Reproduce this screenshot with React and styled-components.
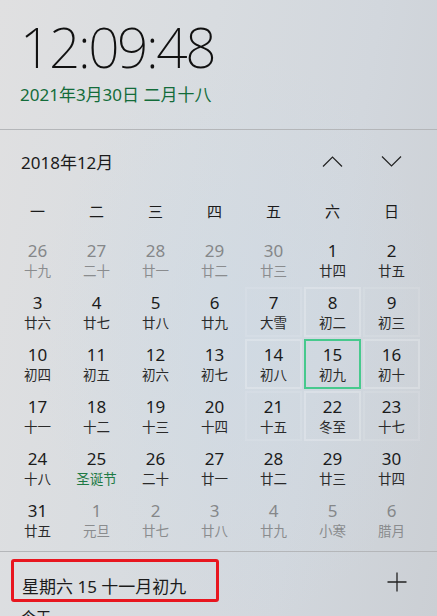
import styled, { createGlobalStyle } from 'styled-components';

const GlobalStyle = createGlobalStyle`
  html, body {
    margin: 0;
    padding: 0;
    overflow: hidden;
  }
  body {
    font-family: "Noto Sans", "Noto Sans CJK SC", sans-serif;
    color: #1b1b1b;
  }
`;

const weekdays = ['一', '二', '三', '四', '五', '六', '日'];

// [day, lunar, kind]  kind: o = other month, f = festival, s = selected, r1/r2 = hover reveal
const days = [
  [26, '十九', 'o'], [27, '二十', 'o'], [28, '廿一', 'o'], [29, '廿二', 'o'], [30, '廿三', 'o'], [1, '廿四'], [2, '廿五'],
  [3, '廿六'], [4, '廿七'], [5, '廿八'], [6, '廿九'], [7, '大雪', 'r2'], [8, '初二', 'r1'], [9, '初三', 'r2'],
  [10, '初四'], [11, '初五'], [12, '初六'], [13, '初七'], [14, '初八', 'r1'], [15, '初九', 's'], [16, '初十', 'r1'],
  [17, '十一'], [18, '十二'], [19, '十三'], [20, '十四'], [21, '十五', 'r2'], [22, '冬至', 'r1'], [23, '十七', 'r2'],
  [24, '十八'], [25, '圣诞节', 'f'], [26, '二十'], [27, '廿一'], [28, '廿二'], [29, '廿三'], [30, '廿四'],
  [31, '廿五'], [1, '元旦', 'o'], [2, '廿七', 'o'], [3, '廿八', 'o'], [4, '廿九', 'o'], [5, '小寒', 'o'], [6, '腊月', 'o'],
];

export default function App() {
  return (
    <Panel>
      <GlobalStyle />
      <ClockSection>
        <Clock>12:09:48</Clock>
        <DateLine>2021年3月30日 二月十八</DateLine>
      </ClockSection>

      <CalendarSection>
        <MonthHeader>
          <MonthTitle>2018年12月</MonthTitle>
          <NavGroup>
            <NavButton aria-label="上一月">
              <svg width="21" height="11" viewBox="0 0 21 11">
                <path d="M1 10.5 L10.5 1 L20 10.5" fill="none" stroke="#222" strokeWidth="1.2" />
              </svg>
            </NavButton>
            <NavButton aria-label="下一月">
              <svg width="21" height="11" viewBox="0 0 21 11">
                <path d="M1 0.5 L10.5 10 L20 0.5" fill="none" stroke="#222" strokeWidth="1.2" />
              </svg>
            </NavButton>
          </NavGroup>
        </MonthHeader>

        <WeekRow>
          {weekdays.map((w) => (
            <WeekDay key={w}>{w}</WeekDay>
          ))}
        </WeekRow>

        <DayGrid>
          {days.map(([d, lunar, kind], i) => (
            <DayCell key={i} $selected={kind === 's'} $reveal={kind === 'r1' ? 1 : kind === 'r2' ? 2 : 0}>
              <DayNum $muted={kind === 'o'}>{d}</DayNum>
              <Lunar $muted={kind === 'o'} $festival={kind === 'f'}>{lunar}</Lunar>
            </DayCell>
          ))}
        </DayGrid>
      </CalendarSection>

      <Footer>
        <FooterRow>
          <SelectedDate>星期六 15 十一月初九</SelectedDate>
          <AddButton aria-label="添加">
            <svg width="20" height="20" viewBox="0 0 20 20">
              <path d="M10 0.5 V19.5 M0.5 10 H19.5" fill="none" stroke="#222" strokeWidth="1.3" />
            </svg>
          </AddButton>
        </FooterRow>
        <EmptyNote>今天</EmptyNote>
      </Footer>
    </Panel>
  );
}

const Panel = styled.div`
  width: 437px;
  height: 616px;
  overflow: hidden;
  background:
    radial-gradient(ellipse at 55% 55%, rgba(205, 218, 230, 0.55) 0%, rgba(205, 218, 230, 0) 60%),
    linear-gradient(100deg, #e0e0e1 0%, #d8dce0 40%, #d2d7dd 70%, #cbcfd4 100%);
`;

const ClockSection = styled.div`
  padding: 15px 20px 23px;
  border-bottom: 1px solid #b4b6b9;
`;

const Clock = styled.div`
  font-family: "Noto Sans", sans-serif;
  font-weight: 200;
  font-size: 55px;
  line-height: 64px;
  letter-spacing: -2.4px;
  color: #111;
`;

const DateLine = styled.div`
  margin-top: 5px;
  font-size: 17px;
  line-height: 22px;
  color: #136c3a;
`;

const CalendarSection = styled.div`
  padding-bottom: 6px;
`;

const MonthHeader = styled.div`
  height: 62px;
  display: flex;
  align-items: center;
  justify-content: space-between;
  padding: 0 16px 0 21px;
`;

const MonthTitle = styled.div`
  font-size: 17px;
  color: #1b1b1b;
`;

const NavGroup = styled.div`
  display: flex;
`;

const NavButton = styled.button`
  width: 59px;
  height: 40px;
  border: none;
  background: transparent;
  display: flex;
  align-items: center;
  justify-content: center;
  padding: 0;
`;

const WeekRow = styled.div`
  display: grid;
  grid-template-columns: repeat(7, 57px);
  column-gap: 2px;
  padding-left: 9px;
  height: 36px;
  align-items: center;
  margin-bottom: 7px;
`;

const WeekDay = styled.div`
  text-align: center;
  font-size: 15px;
  color: #1b1b1b;
`;

const DayGrid = styled.div`
  display: grid;
  grid-template-columns: repeat(7, 57px);
  grid-auto-rows: 50px;
  gap: 2px;
  padding-left: 9px;
`;

const DayCell = styled.div`
  box-sizing: border-box;
  display: flex;
  flex-direction: column;
  align-items: center;
  padding-top: 4px;
  border: 2px solid
    ${(p) =>
      p.$selected
        ? '#47c98d'
        : p.$reveal === 1
        ? 'rgba(255, 255, 255, 0.22)'
        : p.$reveal === 2
        ? 'rgba(255, 255, 255, 0.1)'
        : 'transparent'};
`;

const DayNum = styled.div`
  font-size: 17px;
  line-height: 20px;
  color: ${(p) => (p.$muted ? '#858789' : '#1b1b1b')};
`;

const Lunar = styled.div`
  font-family: "Noto Sans CJK SC", sans-serif;
  font-size: 13.5px;
  line-height: 18px;
  color: ${(p) => (p.$festival ? '#1f7a45' : p.$muted ? '#8a8c8e' : '#2a2a2a')};
`;

const Footer = styled.div`
  border-top: 1px solid #b4b6b9;
  padding: 7px 0 0 11px;
`;

const FooterRow = styled.div`
  display: flex;
  align-items: center;
  justify-content: space-between;
  padding-right: 30px;
`;

const SelectedDate = styled.div`
  box-sizing: border-box;
  width: 208px;
  height: 43px;
  display: flex;
  align-items: center;
  padding: 10px 0 0 8px;
  border: 3px solid #e8161f;
  border-radius: 3px;
  font-size: 17px;
  color: #1b1b1b;
`;

const AddButton = styled.button`
  border: none;
  background: transparent;
  padding: 0;
  display: flex;
  margin-top: 2px;
`;

const EmptyNote = styled.div`
  margin-top: 5px;
  padding-left: 10px;
  font-size: 15px;
  line-height: 20px;
  color: #1b1b1b;
`;
